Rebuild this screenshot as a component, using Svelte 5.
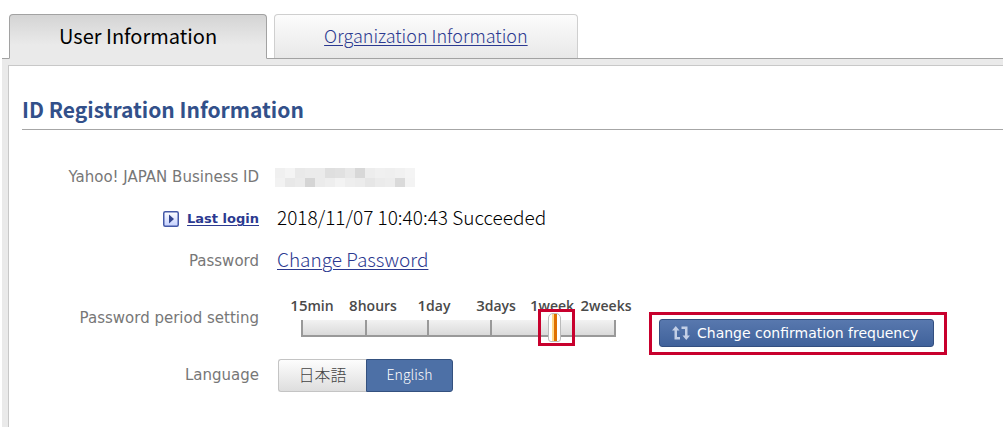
<script>
  const stops = [
    { n: '15', unit: 'min' },
    { n: '8', unit: 'hours' },
    { n: '1', unit: 'day' },
    { n: '3', unit: 'days' },
    { n: '1', unit: 'week' },
    { n: '2', unit: 'weeks' }
  ];
  const mask = [
    ['#f0f0f0', '#f4f4f4', '#e9e9e9', '#ebebeb', '#ebebeb', '#dfdfdf', '#e1e1e1', '#e8e8e8', '#d8d8d8', '#ededed', '#f0f0f0', '#efefef', '#f1f1f1', '#f4f4f4'],
    ['#f2f2f2', '#e8e8e8', '#ebebeb', '#d5d5d5', '#ebebeb', '#eeeeee', '#f3f3f3', '#eeeeee', '#ececec', '#e6e6e6', '#ebebeb', '#ededed', '#dadada', '#f3f3f3']
  ];
  let period = $state(4);
  let language = $state('en');
</script>

<div class="page">
  <nav class="tabs">
    <a class="tab active" href="#user" aria-current="page">User Information</a>
    <a class="tab" href="#organization"><span>Organization Information</span></a>
  </nav>

  <div class="frame">
    <main class="panel">
      <h1>ID Registration Information</h1>

      <div class="row">
        <div class="label">Yahoo! JAPAN Business ID</div>
        <svg class="mask" width="140" height="19" viewBox="0 0 14 2" preserveAspectRatio="none" shape-rendering="crispEdges" aria-hidden="true">
          {#each mask as line, y}
            {#each line as fill, x}
              <rect {x} {y} width="1" height="1" {fill} />
            {/each}
          {/each}
        </svg>
      </div>

      <div class="row">
        <div class="label">
          <svg width="16" height="16" viewBox="0 0 16 16" aria-hidden="true">
            <defs>
              <linearGradient id="playFill" x1="0" y1="0" x2="0" y2="1">
                <stop offset="0" stop-color="#ffffff" />
                <stop offset="1" stop-color="#c3d0ff" />
              </linearGradient>
            </defs>
            <rect x="0.75" y="0.75" width="14.5" height="14.5" rx="1.5" fill="url(#playFill)" stroke="#4459a8" stroke-width="1.5" />
            <path d="M6 3.5 L11 8 L6 12.5 Z" fill="#33458f" />
          </svg>
          <a class="login" href="#login">Last login</a>
        </div>
        <div class="value">2018/11/07 10:40:43 Succeeded</div>
      </div>

      <div class="row">
        <div class="label">Password</div>
        <div class="value"><a href="#password">Change Password</a></div>
      </div>

      <div class="row period">
        <label class="label" for="period">Password period setting</label>
        <div class="scale">
          <div class="stops">
            {#each stops as s}
              <span><b>{s.n}</b>{s.unit}</span>
            {/each}
          </div>
          <div class="track">
            <i></i><i></i><i></i><i></i><i></i>
            <input id="period" type="range" min="0" max="5" bind:value={period} />
            <div class="mark"></div>
          </div>
        </div>
        <div class="callout">
          <button class="change" type="button">
            <svg width="18" height="14" viewBox="0 0 18 14" aria-hidden="true">
              <path d="M0 4.5 L3.75 0 L7.5 4.5 H5 V11 H8 V13.5 H2.5 V4.5 Z" fill="#c3cfe6" />
              <path d="M9.5 0.5 H15.5 V9.5 H18 L14.25 14 L10.5 9.5 H13 V3 H9.5 Z" fill="#c3cfe6" />
            </svg>
            Change confirmation frequency
          </button>
        </div>
      </div>

      <div class="row">
        <div class="label" id="lang">Language</div>
        <div class="switch" role="group" aria-labelledby="lang">
          <button type="button" class="ja" class:on={language === 'ja'} onclick={() => (language = 'ja')}>日本語</button>
          <button type="button" class="en" class:on={language === 'en'} onclick={() => (language = 'en')}>English</button>
        </div>
      </div>
    </main>
  </div>
</div>

<style>
  :global(body) {
    background: #fff;
  }
  * {
    box-sizing: border-box;
  }
  .page {
    min-height: 100vh;
    display: flex;
    flex-direction: column;
    padding: 14px 0 0 2px;
    font-family: 'Noto Sans CJK JP', 'Noto Sans', sans-serif;
    font-weight: 300;
    color: #000;
  }
  a {
    color: #2b3990;
    text-decoration: underline;
    text-decoration-thickness: 1px;
    text-underline-offset: 2px;
  }
  .tabs {
    display: flex;
    gap: 7px;
    padding-left: 7px;
    margin-bottom: -1px;
  }
  .tab {
    height: 45px;
    padding: 0 49px;
    border: 1px solid #cfcfcf;
    border-bottom-color: #a2a2a2;
    border-radius: 4px 4px 0 0;
    background: linear-gradient(#fcfcfc, #e8e8e8);
    font-size: 18px;
    line-height: 41px;
  }
  .tab.active {
    position: relative;
    border-color: #a2a2a2;
    border-bottom-color: #eaeaea;
    background: linear-gradient(#d4d4d4, #eaeaea 70%);
    color: #000;
    font-size: 20px;
    font-weight: 400;
    text-decoration: none;
  }
  .frame {
    flex: 1;
    display: flex;
    padding: 6px 0 0 6px;
    border-top: 1px solid #a2a2a2;
    background: #eaeaea;
  }
  .panel {
    flex: 1;
    padding: 27px 0 20px 13px;
    border-top: 1px solid #c8c8c8;
    border-left: 1px solid #c8c8c8;
    background: #fff;
  }
  h1 {
    margin: 0 0 26px;
    padding-bottom: 4px;
    border-bottom: 1px solid #a6a6a6;
    color: #32508a;
    font-size: 21px;
    line-height: 32px;
    font-weight: 700;
  }
  .row {
    display: flex;
    align-items: center;
    gap: 16px;
    height: 42px;
  }
  .label {
    width: 237px;
    display: flex;
    justify-content: flex-end;
    align-items: center;
    gap: 8px;
    color: #777;
    font-family: 'DejaVu Sans', sans-serif;
    font-size: 15px;
    line-height: 20px;
    font-weight: 400;
    white-space: nowrap;
  }
  .login {
    font-size: 13px;
    font-weight: 700;
  }
  .value {
    padding: 0 0 4px 2px;
    font-size: 19px;
    line-height: 28px;
  }
  .period {
    height: 72px;
  }
  .scale {
    padding: 0 0 4px 6px;
    width: 358px;
  }
  .stops {
    display: grid;
    grid-template-columns: 62px 60px 62px 62px 50px 58px;
    color: #4a4a4a;
    font-family: 'Open Sans', sans-serif;
    font-size: 14px;
    line-height: 20px;
    font-weight: 600;
    text-align: center;
  }
  .stops b {
    font-size: 15px;
    font-weight: 600;
  }
  .track {
    position: relative;
    display: grid;
    grid-template-columns: repeat(5, 1fr);
    width: 315px;
    height: 17px;
    margin: 4px 0 0 20px;
    border: 2px solid #999;
    border-top: 0;
    background: linear-gradient(#f2f2f2, #dadada);
  }
  .track i + i {
    border-left: 2px solid #999;
  }
  .track i:nth-of-type(5) {
    border-left: 0;
  }
  .track input {
    position: absolute;
    left: -6px;
    top: -7px;
    width: 327px;
    height: 29px;
    margin: 0;
    appearance: none;
    background: none;
  }
  .track input::-webkit-slider-thumb {
    appearance: none;
    width: 13px;
    height: 29px;
    border: 1px solid #bbb;
    border-radius: 5px 5px 3px 3px;
    background: linear-gradient(90deg, #fff 0 3px, #ffd98a 3px 5px, #e07000 5px 8px, #fff 8px);
  }
  .mark {
    position: absolute;
    left: 235px;
    top: -11px;
    width: 37px;
    height: 37px;
    border: 3px solid #c8002d;
    pointer-events: none;
  }
  .callout {
    margin-top: 30px;
    padding: 4px 10px 5px 7px;
    border: 3px solid #c8002d;
  }
  .change {
    display: flex;
    align-items: center;
    gap: 7px;
    height: 28px;
    padding: 0 15px 0 12px;
    border: 1px solid #334f80;
    border-radius: 3px;
    background: linear-gradient(#5878ae, #40629b);
    color: #fff;
    font-family: 'DejaVu Sans', sans-serif;
    font-size: 14px;
    font-weight: 400;
    white-space: nowrap;
  }
  .switch {
    display: flex;
    padding-left: 3px;
  }
  .switch button {
    height: 33px;
    padding: 0 0 3px;
    border: 1px solid #c4c4c4;
    background: linear-gradient(#fdfdfd, #dedede);
    color: #444;
    font-family: 'Noto Sans CJK JP', sans-serif;
    font-weight: 300;
  }
  .switch .ja {
    width: 88px;
    border-right: 0;
    border-radius: 3px 0 0 3px;
    font-size: 16px;
  }
  .switch .en {
    width: 87px;
    border-radius: 0 3px 3px 0;
    font-size: 14px;
  }
  .switch .on {
    border: 1px solid #34517f;
    background: #4d70a6;
    color: #fff;
  }
</style>
